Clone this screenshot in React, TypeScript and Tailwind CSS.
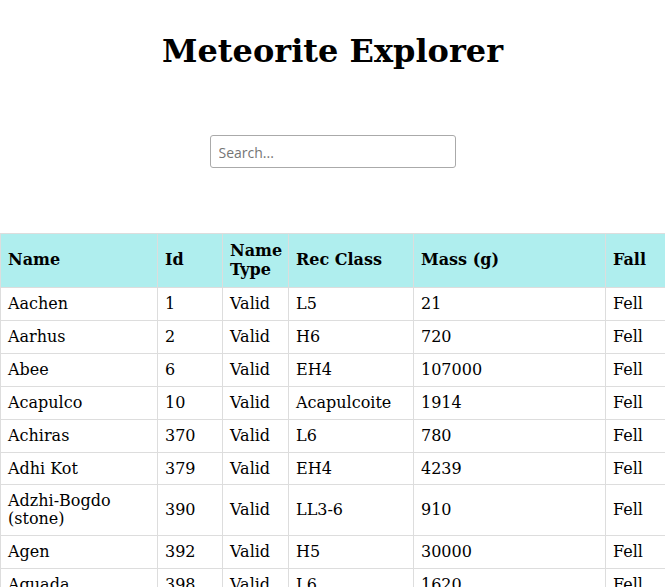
import React, { useState } from 'react';

type Meteorite = {
  name: string;
  id: number;
  nametype: string;
  recclass: string;
  mass: string;
  fall: string;
  year: string;
  reclat: string;
  reclong: string;
};

const meteorites: Meteorite[] = [
  { name: 'Aachen', id: 1, nametype: 'Valid', recclass: 'L5', mass: '21', fall: 'Fell', year: '1880', reclat: '50.775', reclong: '6.08333' },
  { name: 'Aarhus', id: 2, nametype: 'Valid', recclass: 'H6', mass: '720', fall: 'Fell', year: '1951', reclat: '56.18333', reclong: '10.23333' },
  { name: 'Abee', id: 6, nametype: 'Valid', recclass: 'EH4', mass: '107000', fall: 'Fell', year: '1952', reclat: '54.21667', reclong: '-113' },
  { name: 'Acapulco', id: 10, nametype: 'Valid', recclass: 'Acapulcoite', mass: '1914', fall: 'Fell', year: '1976', reclat: '16.88333', reclong: '-99.9' },
  { name: 'Achiras', id: 370, nametype: 'Valid', recclass: 'L6', mass: '780', fall: 'Fell', year: '1902', reclat: '-33.16667', reclong: '-64.95' },
  { name: 'Adhi Kot', id: 379, nametype: 'Valid', recclass: 'EH4', mass: '4239', fall: 'Fell', year: '1919', reclat: '32.1', reclong: '71.8' },
  { name: 'Adzhi-Bogdo (stone)', id: 390, nametype: 'Valid', recclass: 'LL3-6', mass: '910', fall: 'Fell', year: '1949', reclat: '44.83333', reclong: '95.16667' },
  { name: 'Agen', id: 392, nametype: 'Valid', recclass: 'H5', mass: '30000', fall: 'Fell', year: '1814', reclat: '44.21667', reclong: '0.61667' },
  { name: 'Aguada', id: 398, nametype: 'Valid', recclass: 'L6', mass: '1620', fall: 'Fell', year: '1930', reclat: '-31.6', reclong: '-65.23333' },
  { name: 'Aguila Blanca', id: 417, nametype: 'Valid', recclass: 'L', mass: '1440', fall: 'Fell', year: '1920', reclat: '-30.86667', reclong: '-64.55' },
];

const th = 'border border-[#ddd] px-[7px] py-2 text-left align-middle font-bold leading-[18.5px]';
const td = 'border border-[#ddd] px-[7px] py-[7px] align-middle leading-[17.9px]';

export default function App() {
  const [query, setQuery] = useState('');
  const rows = meteorites.filter((m) => m.name.toLowerCase().includes(query.toLowerCase()));

  return (
    <div className="min-h-screen overflow-hidden bg-white text-black font-['DejaVu_Serif',serif]">
      <h1 className="pt-[33px] text-center text-[32px] font-bold leading-[37px]">Meteorite Explorer</h1>

      <div className="mt-[65px] flex justify-center">
        <input
          type="text"
          value={query}
          onChange={(e) => setQuery(e.target.value)}
          placeholder="Search..."
          className="h-[33px] w-[246px] rounded-[3px] border border-[#aaa] px-2 pt-px font-['Open_Sans',sans-serif] text-sm text-black placeholder:text-[#757575] outline-none"
        />
      </div>

      <div className="mt-[65px] overflow-hidden">
        <table className="w-[1100px] table-fixed border-collapse text-base">
          <colgroup>
            <col className="w-[157px]" />
            <col className="w-[65px]" />
            <col className="w-[66px]" />
            <col className="w-[125px]" />
            <col className="w-[192px]" />
            <col className="w-[95px]" />
            <col className="w-[120px]" />
            <col className="w-[140px]" />
            <col className="w-[140px]" />
          </colgroup>
          <thead>
            <tr className="bg-[#afeeee]">
              <th className={th}>Name</th>
              <th className={th}>Id</th>
              <th className={th}>Name Type</th>
              <th className={th}>Rec Class</th>
              <th className={th}>Mass (g)</th>
              <th className={th}>Fall</th>
              <th className={th}>Year</th>
              <th className={th}>Latitude</th>
              <th className={th}>Longitude</th>
            </tr>
          </thead>
          <tbody>
            {rows.map((m) => (
              <tr key={m.id}>
                <td className={td}>{m.name}</td>
                <td className={td}>{m.id}</td>
                <td className={td}>{m.nametype}</td>
                <td className={td}>{m.recclass}</td>
                <td className={td}>{m.mass}</td>
                <td className={td}>{m.fall}</td>
                <td className={td}>{m.year}</td>
                <td className={td}>{m.reclat}</td>
                <td className={td}>{m.reclong}</td>
              </tr>
            ))}
          </tbody>
        </table>
      </div>
    </div>
  );
}
